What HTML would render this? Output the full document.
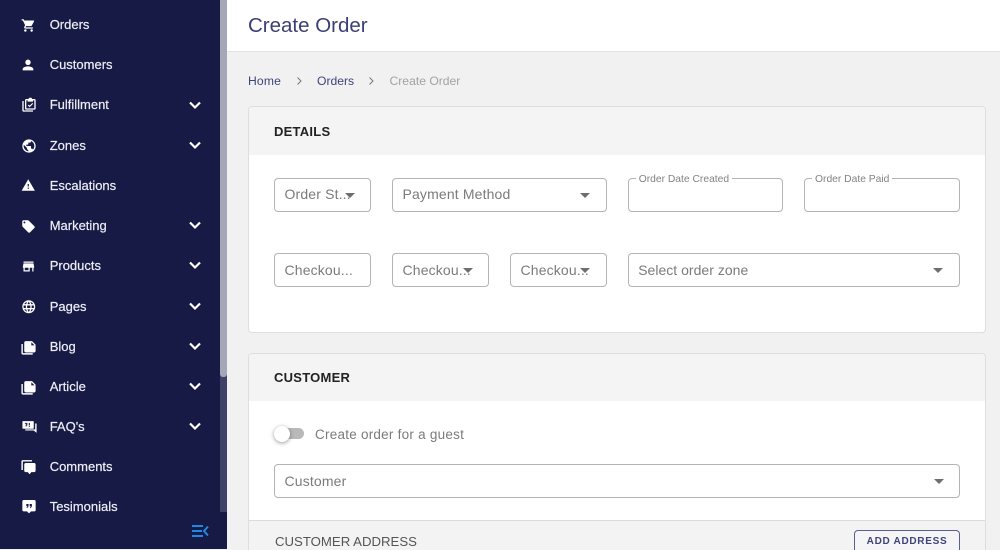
<!DOCTYPE html>
<html><head><meta charset="utf-8"><style>
*{box-sizing:border-box}
html,body{margin:0;padding:0;width:1000px;height:550px;overflow:hidden;background:#f1f1f1;font-family:"Liberation Sans",sans-serif}
#w{position:relative;width:1000px;height:550px;overflow:hidden;background:#f1f1f1}
.a{position:absolute}
#side{left:0;top:0;width:227px;height:549px;background:#161a45;overflow:hidden}
.t{position:absolute;left:49.700px;color:#eeeef4;font-size:13px;line-height:16px;font-weight:400;-webkit-text-stroke:.2px #eeeef4;white-space:nowrap}
.i{position:absolute;fill:#fff}
.c{position:absolute;left:187px;width:16px;height:16px;fill:none;stroke:#fff;stroke-width:2.2;margin-top:-1px}
.f{position:absolute;border:1px solid #b4b4b8;border-radius:4px;background:#fff;height:34px;color:#7b7b7b;font-size:14px;line-height:32px;padding-left:9.500px;white-space:nowrap;letter-spacing:.15px}
.f b{position:absolute;top:14px;right:15.500px;width:0;height:0;border-left:5px solid transparent;border-right:5px solid transparent;border-top:5px solid #6e6e6e}
.l{position:absolute;top:-6.500px;left:7px;background:#fff;padding:0 3px;font-size:10.300px;line-height:14px;color:#828282;letter-spacing:0}
.card{position:absolute;left:248px;width:738px;background:#fff;border:1px solid #dedede;border-radius:4px;overflow:hidden}
.h{position:absolute;left:0;top:0;width:100%;height:48px;background:#f4f4f4;color:#222;font-size:13px;font-weight:700;line-height:50px;padding-left:25px;letter-spacing:.25px}
.bc{position:absolute;top:73px;font-size:12.150px;line-height:16px;color:#3f4478;white-space:nowrap}
</style></head><body><div id="w">
<div id="side" class="a">
<div class="a" style="left:220px;top:0;width:7px;height:512px;background:#3f4168"></div>
<div class="a" style="left:220px;top:0;width:7px;height:377px;background:#a5a6b7;border-radius:0 0 3px 3px"></div>

<svg class="i" style="left:20.800px;top:17.500px;width:15px;height:15px" viewBox="0 0 24 24"><path d="M7 18c-1.100 0-1.990.900-1.990 2S5.900 22 7 22s2-.9 2-2-.9-2-2-2zM1 2v2h2l3.600 7.590-1.350 2.450c-.16.280-.25.610-.25.960 0 1.100.9 2 2 2h12v-2H7.420c-.14 0-.25-.11-.25-.25l.03-.12.9-1.630h7.450c.750 0 1.410-.41 1.750-1.030l3.580-6.490c.08-.14.120-.31.120-.48 0-.55-.45-1-1-1H5.210l-.94-2H1zm16 16c-1.100 0-1.990.900-1.990 2s.890 2 1.990 2 2-.9 2-2-.9-2-2-2z"/></svg>
<div class="t" style="top:17px">Orders</div>

<svg class="i" style="left:20px;top:57px;width:16px;height:16px" viewBox="0 0 24 24"><path d="M12 12c2.210 0 4-1.790 4-4s-1.790-4-4-4-4 1.790-4 4 1.790 4 4 4zm0 2c-2.670 0-8 1.340-8 4v2h16v-2c0-2.660-5.330-4-8-4z"/></svg>
<div class="t" style="top:57px">Customers</div>

<svg class="i" style="left:20.500px;top:97px;width:16px;height:16px" viewBox="0 0 24 24"><path d="M2 6h2v14h14v2H4c-1.100 0-2-.9-2-2z"/><path fill-rule="evenodd" d="M8 3h3.200a2.900 2.900 0 0 1 5.600 0H20c1.100 0 2 .9 2 2v12c0 1.100-.9 2-2 2H8c-1.100 0-2-.9-2-2V5c0-1.100.9-2 2-2zm0 2v12h12V5h-2v2h-8V5zm3.500 6.500 1.500 1.500 4-4 1.200 1.200-5.200 5.200-2.700-2.700z"/></svg>
<div class="t" style="top:97px">Fulfillment</div>
<svg class="c" style="top:98px" viewBox="0 0 16 16"><path d="M3 5.500 8 10.500l5-5"/></svg>

<svg class="i" style="left:20.500px;top:137.500px;width:16px;height:16px" viewBox="0 0 24 24"><path d="M12 2C6.480 2 2 6.480 2 12s4.480 10 10 10 10-4.480 10-10S17.520 2 12 2zm-1 17.930c-3.950-.49-7-3.850-7-7.930 0-.62.080-1.210.21-1.790L9 15v1c0 1.100.9 2 2 2v1.930zm6.900-2.540c-.26-.81-1-1.390-1.900-1.390h-1v-3c0-.55-.45-1-1-1H8v-2h2c.55 0 1-.45 1-1V7h2c1.100 0 2-.9 2-2v-.41c2.930 1.190 5 4.060 5 7.410 0 2.080-.8 3.970-2.100 5.390z"/></svg>
<div class="t" style="top:137.500px">Zones</div>
<svg class="c" style="top:138px" viewBox="0 0 16 16"><path d="M3 5.500 8 10.500l5-5"/></svg>

<svg class="i" style="left:21px;top:178px;width:14.500px;height:14.500px" viewBox="0 0 24 24"><path d="M1 21h22L12 2 1 21zm12-3h-2v-2h2v2zm0-4h-2v-4h2v4z"/></svg>
<div class="t" style="top:178px">Escalations</div>

<svg class="i" style="left:20.700px;top:219px;width:15px;height:15px" viewBox="0 0 24 24"><path d="M21.410 11.580l-9-9C12.050 2.220 11.550 2 11 2H4c-1.100 0-2 .9-2 2v7c0 .55.220 1.050.59 1.420l9 9c.36.360.860.580 1.410.580.550 0 1.050-.22 1.410-.59l7-7c.370-.36.590-.86.590-1.410 0-.55-.23-1.060-.59-1.420zM5.500 7C4.670 7 4 6.330 4 5.500S4.670 4 5.500 4 7 4.670 7 5.500 6.330 7 5.500 7z"/></svg>
<div class="t" style="top:218px">Marketing</div>
<svg class="c" style="top:218px" viewBox="0 0 16 16"><path d="M3 5.500 8 10.500l5-5"/></svg>

<svg class="i" style="left:20.700px;top:258.800px;width:15px;height:15px" viewBox="0 0 24 24"><path d="M20 4H4v2h16V4zm1 10v-2l-1-5H4l-1 5v2h1v6h10v-6h4v6h2v-6h1zm-9 4H6v-4h6v4z"/></svg>
<div class="t" style="top:258px">Products</div>
<svg class="c" style="top:258px" viewBox="0 0 16 16"><path d="M3 5.500 8 10.500l5-5"/></svg>

<svg class="i" style="left:20.600px;top:298.500px;width:15.500px;height:15.500px" viewBox="0 0 24 24"><path d="M11.990 2C6.470 2 2 6.480 2 12s4.470 10 9.990 10C17.520 22 22 17.520 22 12S17.520 2 11.990 2zm6.930 6h-2.950c-.32-1.250-.78-2.450-1.380-3.560 1.840.630 3.370 1.910 4.330 3.560zM12 4.040c.830 1.200 1.480 2.530 1.910 3.960h-3.820c.430-1.430 1.080-2.760 1.910-3.960zM4.260 14C4.100 13.360 4 12.690 4 12s.1-1.360.26-2h3.380c-.08.660-.14 1.320-.14 2 0 .68.060 1.340.14 2H4.260zm.82 2h2.950c.32 1.250.78 2.450 1.380 3.560-1.840-.63-3.370-1.900-4.330-3.560zm2.950-8H5.080c.96-1.660 2.490-2.930 4.330-3.560C8.810 5.550 8.350 6.750 8.030 8zM12 19.960c-.83-1.200-1.480-2.530-1.910-3.960h3.820c-.43 1.430-1.080 2.760-1.910 3.960zM14.340 14H9.660c-.09-.66-.16-1.320-.16-2 0-.68.070-1.350.16-2h4.680c.09.650.16 1.320.16 2 0 .68-.07 1.340-.16 2zm.25 5.560c.6-1.110 1.060-2.310 1.380-3.560h2.950c-.96 1.650-2.490 2.930-4.330 3.560zM16.360 14c.08-.66.14-1.320.14-2 0-.68-.06-1.340-.14-2h3.380c.16.640.26 1.310.26 2s-.1 1.360-.26 2h-3.380z"/></svg>
<div class="t" style="top:298.500px">Pages</div>
<svg class="c" style="top:299px" viewBox="0 0 16 16"><path d="M3 5.500 8 10.500l5-5"/></svg>

<svg class="i" style="left:20px;top:339px;width:17px;height:17px" viewBox="0 0 24 24"><path d="M2 7h2v13h14v2H4c-1.100 0-2-.9-2-2z"/><path d="M8 3h9l5 5v9c0 1.100-.9 2-2 2H8c-1.100 0-2-.9-2-2V5c0-1.100.9-2 2-2zm8 1.500V9h4.500z" fill-rule="evenodd"/></svg>
<div class="t" style="top:338.500px">Blog</div>
<svg class="c" style="top:339px" viewBox="0 0 16 16"><path d="M3 5.500 8 10.500l5-5"/></svg>

<svg class="i" style="left:20px;top:379px;width:17px;height:17px" viewBox="0 0 24 24"><path d="M2 7h2v13h14v2H4c-1.100 0-2-.9-2-2z"/><path d="M8 3h9l5 5v9c0 1.100-.9 2-2 2H8c-1.100 0-2-.9-2-2V5c0-1.100.9-2 2-2zm8 1.500V9h4.500z" fill-rule="evenodd"/></svg>
<div class="t" style="top:378.500px">Article</div>
<svg class="c" style="top:379px" viewBox="0 0 16 16"><path d="M3 5.500 8 10.500l5-5"/></svg>

<svg class="i" style="left:20.500px;top:420px;width:17px;height:14px" viewBox="0 0 24 24" preserveAspectRatio="none"><path d="M20 6h2v16l-4-4H6v-2h14z"/><path fill-rule="evenodd" d="M3 2h14c.55 0 1 .45 1 1v11c0 .55-.45 1-1 1H3c-.55 0-1-.45-1-1V3c0-.55.45-1 1-1zm2.500 3v1.500h2V8H6.500v3H8V9.500h1V5zM11 5v4.500h1.500V5zm0 5.500V12h1.500v-1.500z"/></svg>
<div class="t" style="top:419px">FAQ's</div>
<svg class="c" style="top:419px" viewBox="0 0 16 16"><path d="M3 5.500 8 10.500l5-5"/></svg>

<svg class="i" style="left:20px;top:458px;width:17px;height:17px" viewBox="0 0 24 24"><path d="M4 3h13v2H4v12H2V5c0-1.100.9-2 2-2z"/><path d="M8 7h12c1.100 0 2 .9 2 2v9c0 1.100-.9 2-2 2h-4l-2.500 3-2.500-3H8c-1.100 0-2-.9-2-2V9c0-1.100.9-2 2-2z"/></svg>
<div class="t" style="top:459px">Comments</div>

<svg class="i" style="left:20.500px;top:498px;width:16px;height:16px" viewBox="0 0 24 24"><path fill-rule="evenodd" d="M4 3h16c1.100 0 2 .9 2 2v13c0 1.100-.9 2-2 2h-5l-3 3-3-3H4c-1.100 0-2-.9-2-2V5c0-1.100.9-2 2-2zm4 6v3h1.500c0 .8-.4 1.200-1 1.300V15c1.700-.2 2.800-1.300 2.800-3.300V9zm5 0v3h1.500c0 .8-.4 1.200-1 1.300V15c1.700-.2 2.800-1.300 2.800-3.300V9z"/></svg>
<div class="t" style="top:499px">Tesimonials</div>

<svg class="a" style="left:191px;top:524px;width:18px;height:14px" viewBox="0 0 18 14" fill="none" stroke="#1e88e5" stroke-width="2"><path d="M1 2h11M1 7h10M1 12h11M17 2.500 13 7l4 4.500"/></svg>
</div>

<div class="a" style="left:227px;top:0;width:773px;height:52px;background:#fff;border-bottom:1px solid #e2e2e2"></div>
<div class="a" style="left:248px;top:13px;font-size:20.500px;line-height:25px;color:#3a3f74;white-space:nowrap">Create Order</div>

<div class="bc" style="left:248px;letter-spacing:.15px">Home</div>
<svg class="a" style="left:295px;top:76px;width:8px;height:10px" viewBox="0 0 8 10" fill="none" stroke="#777" stroke-width="1"><path d="M2.500 1.500 6 5 2.500 8.500"/></svg>
<div class="bc" style="left:317px">Orders</div>
<svg class="a" style="left:367px;top:76px;width:8px;height:10px" viewBox="0 0 8 10" fill="none" stroke="#777" stroke-width="1"><path d="M2.500 1.500 6 5 2.500 8.500"/></svg>
<div class="bc" style="left:389.500px;color:#a2a2a2">Create Order</div>

<div class="card" style="top:106px;height:227px"><div class="h">DETAILS</div></div>
<div class="f" style="left:274px;top:178px;width:97px;line-height:31px">Order St...<b></b></div>
<div class="f" style="left:392px;top:178px;width:214.500px;line-height:31px">Payment Method<b></b></div>
<div class="f" style="left:627.700px;top:178px;width:155px"><span class="l">Order Date Created</span></div>
<div class="f" style="left:804px;top:178px;width:156px"><span class="l">Order Date Paid</span></div>
<div class="f" style="left:274px;top:253px;width:97px">Checkou...</div>
<div class="f" style="left:392px;top:253px;width:97px">Checkou...<b></b></div>
<div class="f" style="left:510px;top:253px;width:96.500px">Checkou...<b></b></div>
<div class="f" style="left:627.700px;top:253px;width:332.300px;letter-spacing:.02px">Select order zone<b></b></div>

<div class="card" style="top:353px;height:200px"><div class="h" style="height:47px;line-height:47px">CUSTOMER</div>
<div class="a" style="left:0;top:166px;width:100%;height:40px;background:#f3f3f3;border-top:1px solid #dcdcdc"></div></div>

<div class="a" style="left:277px;top:428px;width:27px;height:11px;background:#b9b9b9;border-radius:6px"></div>
<div class="a" style="left:274px;top:426px;width:16px;height:16px;background:#fff;border-radius:50%;box-shadow:0 1px 4px rgba(0,0,0,.4)"></div>
<div class="a" style="left:315px;top:426.500px;font-size:13.500px;line-height:16px;color:#7b7b7b;white-space:nowrap;letter-spacing:.24px">Create order for a guest</div>
<div class="f" style="left:274px;top:464px;width:686px">Customer<b></b></div>
<div class="a" style="left:275px;top:534px;font-size:13.200px;line-height:16px;color:#555;white-space:nowrap">CUSTOMER ADDRESS</div>
<div class="a" style="left:854px;top:530px;width:106px;height:26px;background:#f5f5f8;border:1px solid #5a5f90;border-radius:4px;font-size:10px;font-weight:700;line-height:21px;text-align:center;color:#3f4478;letter-spacing:.7px">ADD ADDRESS</div>
</div></body></html>
